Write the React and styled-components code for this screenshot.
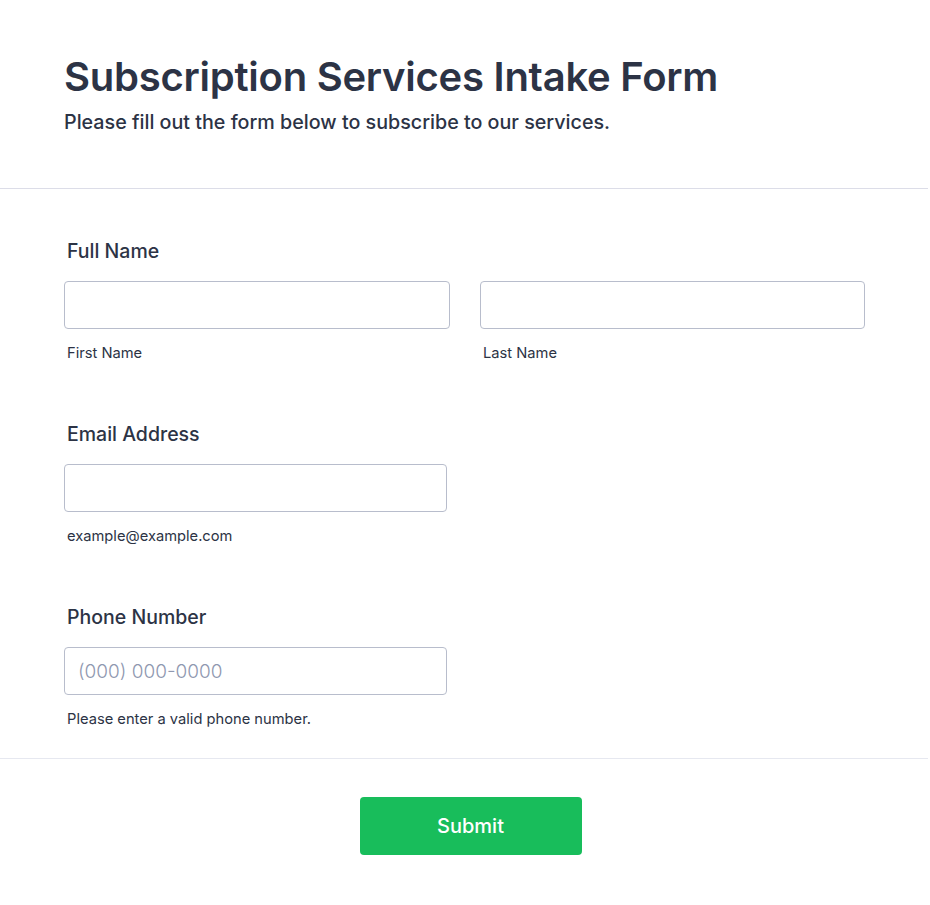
import React from 'react'
import styled, { createGlobalStyle } from 'styled-components'

const GlobalStyle = createGlobalStyle`
  body {
    margin: 0;
    background: #fff;
    font-family: Inter, "Noto Sans", sans-serif;
    color: #2c3345;
  }
`;

const Page = styled.div`
  width: 928px;
  background: #fff;
`;

const Header = styled.header`
  padding: 53px 64px 54px;
  border-bottom: 1px solid #dcdde8;
`;

const Title = styled.h1`
  margin: 0;
  font-size: 40px;
  line-height: 48px;
  font-weight: 600;
  letter-spacing: -0.25px;
  color: #2c3345;
`;

const Subtitle = styled.p`
  margin: 9px 0 0;
  font-size: 19.7px;
  line-height: 24px;
  font-weight: 500;
  color: #2c3345;
`;

const Form = styled.form`
  padding: 50px 64px 30px;
  border-bottom: 1px solid #e6e8f0;
  display: flex;
  flex-direction: column;
  gap: 60px;
`;

const Field = styled.div`
  display: flex;
  flex-direction: column;
`;

const Label = styled.label`
  padding-left: 3px;
  font-size: 19.5px;
  line-height: 24px;
  font-weight: 500;
  margin-bottom: 18px;
`;

const Row = styled.div`
  display: grid;
  grid-template-columns: ${p => p.$cols === 2 ? '386px 385px' : '383px'};
  column-gap: 30px;
`;

const Col = styled.div`
  display: flex;
  flex-direction: column;
`;

const Input = styled.input`
  box-sizing: border-box;
  height: 48px;
  width: 100%;
  border: 1px solid #b8bdcc;
  border-radius: 4px;
  padding: 0 13px;
  font-family: Inter, "Noto Sans", sans-serif;
  font-size: 19px;
  font-weight: 300;
  color: #2c3345;
  background: #fff;
  outline: none;
  &::placeholder {
    color: #8f98b0;
  }
`;

const SubLabel = styled.span`
  margin-top: 15px;
  padding-left: 3px;
  font-size: 14.7px;
  line-height: 18px;
  color: #2c3345;
`;

const Footer = styled.div`
  display: flex;
  justify-content: center;
  padding: 38px 0 48px 13px;
`;

const SubmitButton = styled.button`
  width: 222px;
  height: 58px;
  border: none;
  border-radius: 4px;
  background: #18bd5b;
  color: #fff;
  font-family: Inter, "Noto Sans", sans-serif;
  font-size: 20px;
  font-weight: 500;
  cursor: pointer;
`;

function App() {
  return (
    <Page>
      <GlobalStyle />
      <Header>
        <Title>Subscription Services Intake Form</Title>
        <Subtitle>Please fill out the form below to subscribe to our services.</Subtitle>
      </Header>

      <Form onSubmit={e => e.preventDefault()}>
        <Field>
          <Label>Full Name</Label>
          <Row $cols={2}>
            <Col>
              <Input type="text" />
              <SubLabel>First Name</SubLabel>
            </Col>
            <Col>
              <Input type="text" />
              <SubLabel>Last Name</SubLabel>
            </Col>
          </Row>
        </Field>

        <Field>
          <Label>Email Address</Label>
          <Row>
            <Col>
              <Input type="email" />
              <SubLabel>example@example.com</SubLabel>
            </Col>
          </Row>
        </Field>

        <Field>
          <Label>Phone Number</Label>
          <Row>
            <Col>
              <Input type="tel" placeholder="(000) 000-0000" />
              <SubLabel>Please enter a valid phone number.</SubLabel>
            </Col>
          </Row>
        </Field>
      </Form>

      <Footer>
        <SubmitButton type="button">Submit</SubmitButton>
      </Footer>
    </Page>
  )
}

export default App
